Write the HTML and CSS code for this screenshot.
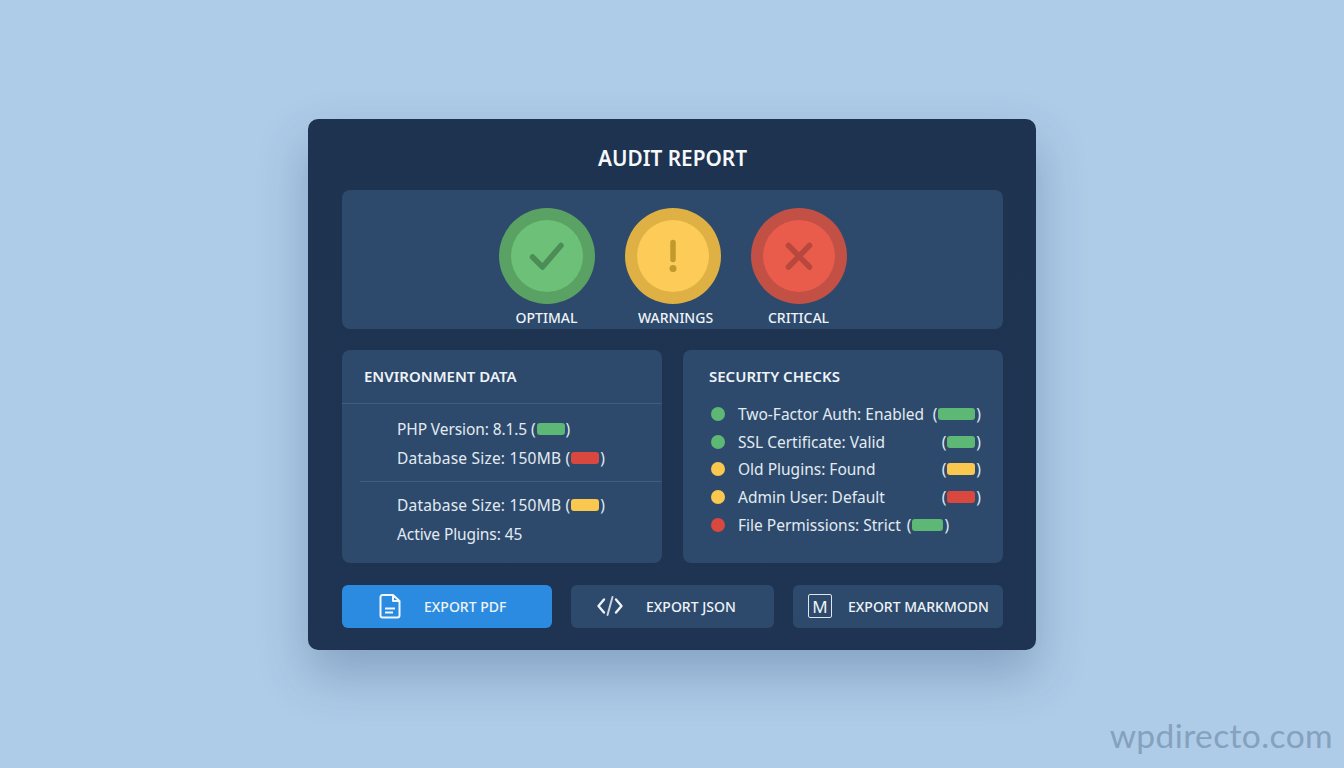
FILE: index.html
```html
<!DOCTYPE html>
<html>
    <head>
        <meta charset="utf-8">
        <title>Audit Report</title>
        <link rel="stylesheet" href="styles.css">
    </head>
    <body>
        <div class="card">
            <h1>AUDIT REPORT</h1>

            <div class="panel summary">
                <div class="status">
                    <div class="ring ring-green">
                        <div class="disc disc-green">
                            <svg width="40" height="40" viewBox="0 0 40 40"><path d="M5.5 21 L15.5 31 L34 9.5" fill="none" stroke="#4b8c57" stroke-width="5.5" stroke-linecap="round" stroke-linejoin="round"/></svg>
                        </div>
                    </div>
                    <span>OPTIMAL</span>
                </div>
                <div class="status">
                    <div class="ring ring-yellow">
                        <div class="disc disc-yellow">
                            <svg width="40" height="40" viewBox="0 0 40 40"><path d="M20 6.5 V23.5" fill="none" stroke="#c09a2c" stroke-width="5.5" stroke-linecap="round"/><circle cx="20" cy="32.5" r="3.5" fill="#c09a2c"/></svg>
                        </div>
                    </div>
                    <span class="shifted">WARNINGS</span>
                </div>
                <div class="status">
                    <div class="ring ring-red">
                        <div class="disc disc-red">
                            <svg width="40" height="40" viewBox="0 0 40 40"><path d="M9.5 9.5 L30.5 31 M30.5 9.5 L9.5 31" fill="none" stroke="#b8473d" stroke-width="5.5" stroke-linecap="round"/></svg>
                        </div>
                    </div>
                    <span>CRITICAL</span>
                </div>
            </div>

            <div class="columns">
                <div class="panel env">
                    <h2>ENVIRONMENT DATA</h2>
                    <div class="env-group">
                        <div class="env-row">PHP Version: 8.1.5 <span class="state">(<i class="pill green w-28"></i>)</span></div>
                        <div class="env-row db">Database Size: 150MB <span class="state">(<i class="pill red w-28"></i>)</span></div>
                    </div>
                    <div class="env-group second">
                        <div class="env-row db">Database Size: 150MB <span class="state">(<i class="pill yellow w-28"></i>)</span></div>
                        <div class="env-row">Active Plugins: 45</div>
                    </div>
                </div>

                <div class="panel checks">
                    <h2>SECURITY CHECKS</h2>
                    <div class="check"><i class="dot green"></i>Two-Factor Auth: Enabled <span class="state end">(<i class="pill green w-37"></i>)</span></div>
                    <div class="check"><i class="dot green"></i>SSL Certificate: Valid <span class="state end">(<i class="pill green w-28"></i>)</span></div>
                    <div class="check"><i class="dot yellow"></i>Old Plugins: Found <span class="state end">(<i class="pill yellow w-28"></i>)</span></div>
                    <div class="check"><i class="dot yellow"></i>Admin User: Default <span class="state end">(<i class="pill red w-28"></i>)</span></div>
                    <div class="check"><i class="dot red"></i>File Permissions: Strict <span class="state near">(<i class="pill green w-30"></i>)</span></div>
                </div>
            </div>

            <div class="actions">
                <div class="btn btn-pdf">
                    <svg width="24" height="26" viewBox="0 0 24 26"><path d="M4.5 2 H15 L21.5 8 V22.5 A2 2 0 0 1 19.5 24.5 H4.5 A2 2 0 0 1 2.5 22.5 V4 A2 2 0 0 1 4.5 2 Z M15 2 V8 H21.5 M7 15.5 H17 M7 19.5 H15" fill="none" stroke="#f2f7fc" stroke-width="2" stroke-linejoin="round"/></svg>
                    EXPORT PDF
                </div>
                <div class="btn btn-json">
                    <svg width="30" height="22" viewBox="0 0 30 22"><path d="M9 4.5 L3.5 11 L9 17.5 M21 4.5 L26.5 11 L21 17.5" fill="none" stroke="#eef3f8" stroke-width="2.4" stroke-linecap="round" stroke-linejoin="round"/><path d="M17.5 2 L12.5 20" fill="none" stroke="#c9d4e0" stroke-width="2" stroke-linecap="round"/></svg>
                    EXPORT JSON
                </div>
                <div class="btn btn-md">
                    <span class="md-icon">M</span>
                    EXPORT MARKMODN
                </div>
            </div>
        </div>
        <div class="watermark">wpdirecto.com</div>
    </body>
</html>
```

FILE: styles.css
```css
*{box-sizing:border-box;}
body,html{
    margin: 0;
    width: 100%;
    height: 100%;
    font-family: "Noto Sans", sans-serif;
    color: #e3eaf2;
}
body {display:flex; align-items:center; justify-content:center; background-color: #aecbe8; overflow:hidden;}

.card {
    width: 728px;
    height: 531px;
    padding: 0 33px 22px 34px;
    background: linear-gradient(#1d3350, #1f3452);
    border-radius: 10px;
    box-shadow: 0 24px 50px rgba(40,70,110,.3);
    display: flex;
    flex-direction: column;
}
h1 {
    margin: 0;
    height: 71px;
    line-height: 78px;
    text-align: center;
    font-size: 20.8px;
    font-weight: 600;
    color: #f6f8fb;
}
h2 {
    margin: 0;
    font-size: 15px;
    font-weight: 600;
    color: #eef3f8;
}
.panel {background-color: #2d4a6c; border-radius: 8px;}

.summary {
    height: 139px;
    padding-top: 18px;
    display: flex;
    justify-content: center;
    gap: 30px;
}
.status {width: 96px; display:flex; flex-direction:column; align-items:center;}
.status span {
    margin-top: 4px;
    line-height: 20px;
    font-size: 14px;
    font-weight: 500;
    white-space: nowrap;
    color: #eef3f8;
}
.status .shifted {margin-left: 6px;}
.ring {width:96px; height:96px; border-radius:50%; display:flex; align-items:center; justify-content:center;}
.disc {width:72px; height:72px; border-radius:50%; display:flex; align-items:center; justify-content:center;}
.ring-green {background-color:#5aa263;}
.disc-green {background-color:#6cc077;}
.ring-yellow {background-color:#dfb043;}
.disc-yellow {background-color:#fdcb57;}
.ring-red {background-color:#c25045;}
.disc-red {background-color:#e95b4b;}

.columns {display:grid; grid-template-columns: 1fr 1fr; gap: 21px; margin-top: 21px; height: 213px;}

.env h2 {
    height: 54px;
    padding: 16px 0 0 22px;
    line-height: 20px;
    border-bottom: 1px solid #3e5d80;
}
.env-group {padding: 11px 0 8px 55px;}
.env-group.second {
    margin-left: 18px;
    padding: 9px 0 0 37px;
    border-top: 1px solid #3e5d80;
}
.env-row {height: 29px; line-height: 29px; font-size: 15.5px; letter-spacing: -.1px; white-space: nowrap;}
.env-row.db {letter-spacing: .2px;}

.checks {padding: 16px 22px 0 26px;}
.checks h2 {line-height: 20px; margin-bottom: 14.5px;}
.check {
    height: 27.75px;
    display: flex;
    align-items: center;
    font-size: 15.5px;
    white-space: nowrap;
}
.dot {width:14px; height:14px; border-radius:50%; margin:0 13px 0 2px; flex:none;}
.state {display:inline-flex; align-items:center;}
.state.end {margin-left:auto;}
.state.near {margin-left:6px;}

.pill {display:inline-block; height:12px; border-radius:3px; margin:0 1px;}
.w-28 {width:28px;}
.w-30 {width:31px;}
.w-37 {width:37px;}
.pill.green, .dot.green {background-color:#5cb874;}
.pill.red, .dot.red {background-color:#d9483f;}
.pill.yellow, .dot.yellow {background-color:#fbc84f;}

.actions {display:flex; gap: 19px; margin-top: 22px; height: 43px;}
.btn {
    height: 43px;
    border-radius: 6px;
    display: flex;
    align-items: center;
    font-size: 14px;
    font-weight: 500;
    color: #eef3f8;
    white-space: nowrap;
}
.btn-pdf {width:210px; padding-left:36px; gap:22px; background-color:#2b8be0;}
.btn-json {width:203px; padding-left:24px; gap:21px; background-color:#2d4a6c;}
.btn-md {width:210px; padding-left:15px; gap:16px; background-color:#2d4a6c;}
.md-icon {
    width: 24px;
    height: 24px;
    border: 1.5px solid #dfe6ee;
    border-radius: 2px;
    display: flex;
    align-items: center;
    justify-content: center;
    font-size: 17px;
    font-weight: 400;
}

.watermark {
    position: absolute;
    right: 11px;
    bottom: 11px;
    font-family: Lato, sans-serif;
    font-size: 33.5px;
    line-height: 44px;
    letter-spacing: .4px;
    color: #84a1bd;
}
```
